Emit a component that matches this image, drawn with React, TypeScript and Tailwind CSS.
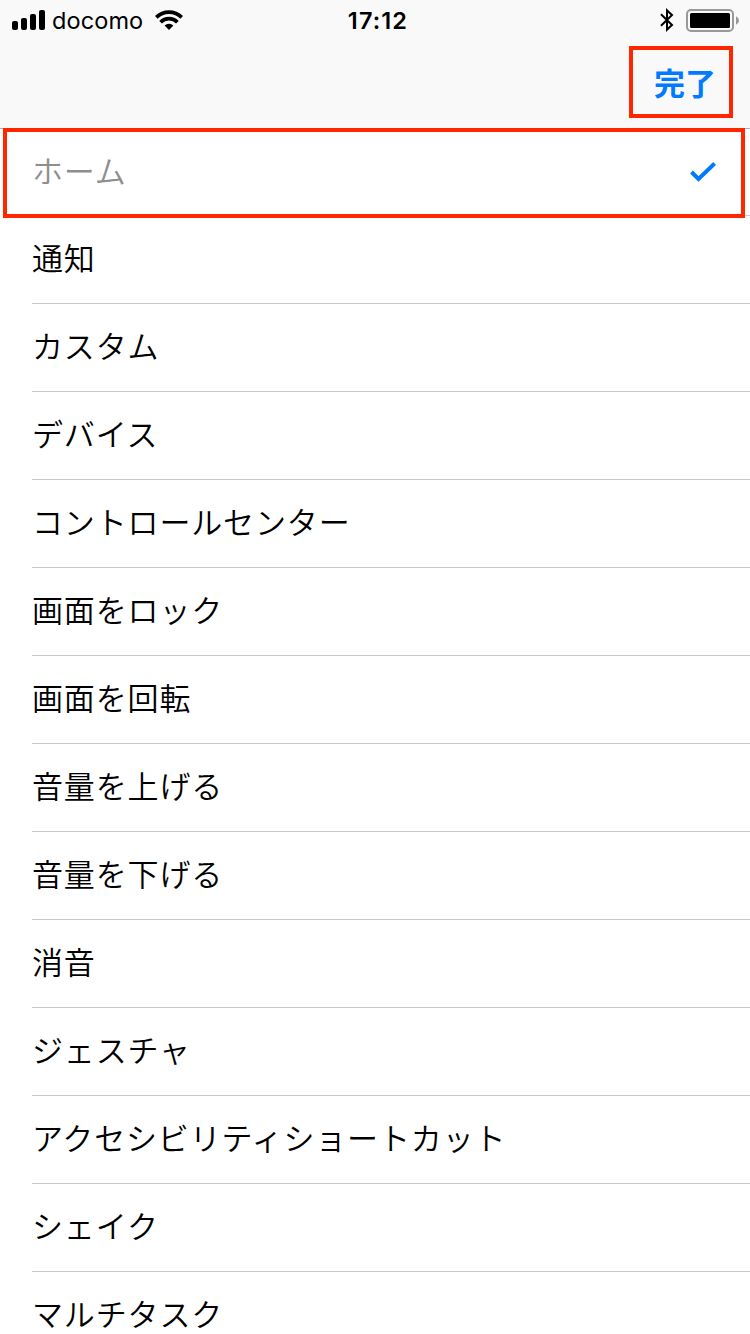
import React from 'react';

interface Action {
  label: string;
  selected?: boolean;
}

const actions: Action[] = [
  { label: 'ホーム', selected: true },
  { label: '通知' },
  { label: 'カスタム' },
  { label: 'デバイス' },
  { label: 'コントロールセンター' },
  { label: '画面をロック' },
  { label: '画面を回転' },
  { label: '音量を上げる' },
  { label: '音量を下げる' },
  { label: '消音' },
  { label: 'ジェスチャ' },
  { label: 'アクセシビリティショートカット' },
  { label: 'シェイク' },
  { label: 'マルチタスク' },
];

const SignalIcon: React.FC = () => (
  <svg width="33" height="20" viewBox="0 0 33 20" fill="currentColor">
    <rect x="0" y="11" width="6" height="9" rx="2" />
    <rect x="9" y="8" width="6" height="12" rx="2" />
    <rect x="18" y="4" width="6" height="16" rx="2" />
    <rect x="27" y="0" width="6" height="20" rx="2" />
  </svg>
);

const WifiIcon: React.FC = () => (
  <svg width="28" height="20" viewBox="0 0 28 20" fill="none" stroke="currentColor" strokeWidth="3.7">
    <path d="M1.3 7.4A18 18 0 0 1 26.7 7.4" />
    <path d="M5.6 12.3A11.6 11.6 0 0 1 22.4 12.3" />
    <path d="M14 20 9.6 15.6A6.2 6.2 0 0 1 18.4 15.6Z" fill="currentColor" stroke="none" />
  </svg>
);

const BluetoothIcon: React.FC = () => (
  <svg width="14" height="24" viewBox="0 0 14 24" fill="none" stroke="currentColor" strokeWidth="2">
    <path d="M1 6.2 12 17 7 21.6V2.4L12 7 1 17.8" />
  </svg>
);

const BatteryIcon: React.FC = () => (
  <svg width="53" height="23" viewBox="0 0 53 23">
    <rect x="1" y="1" width="46" height="21" rx="4" fill="none" stroke="#999999" strokeWidth="2" />
    <rect x="4" y="4" width="40" height="15" rx="1.5" fill="#000000" />
    <path d="M50 7.2Q53 8.8 53 11.5T50 15.8Z" fill="#999999" />
  </svg>
);

const CheckIcon: React.FC = () => (
  <svg width="26" height="20" viewBox="0 0 26 20" fill="none" stroke="#007aff" strokeWidth="4">
    <path d="M1.5 10 8.5 17 24.6 1.5" />
  </svg>
);

const StatusBar: React.FC = () => (
  <div className="grid h-10 grid-cols-[1fr_auto_1fr] items-center pl-3 pr-[11px] font-[Inter,sans-serif] leading-8">
    <div className="flex h-10 items-center">
      <SignalIcon />
      <span className="ml-[7px] w-[91px] whitespace-nowrap pt-0.5 text-[23.5px] tracking-[0.1px]">docomo</span>
      <span className="ml-3">
        <WifiIcon />
      </span>
    </div>
    <span className="pl-[5px] pt-0.5 text-[23.5px] font-semibold tracking-[1.1px]">17:12</span>
    <div className="flex h-10 items-center justify-end gap-3">
      <BluetoothIcon />
      <BatteryIcon />
    </div>
  </div>
);

const Header: React.FC = () => (
  <header className="h-[129px] border-b border-[#b2b2b2] bg-[#f9f9f9]">
    <StatusBar />
    <div className="flex justify-end pr-[17px] pt-1.5">
      <button className="flex h-[72px] w-[104px] items-center justify-center border-4 border-[#ff2600] pb-0.5 pl-2 text-[31px] font-bold leading-none text-[#007aff]">
        完了
      </button>
    </div>
  </header>
);

const ActionRow: React.FC<{ action: Action }> = ({ action }) => (
  <li
    className={`flex items-center justify-between border-b border-[#c8c8c8] pr-[34px] ${
      action.selected ? 'h-[87px] text-[#8e8e8e]' : 'h-[88px]'
    }`}
  >
    <span className="whitespace-nowrap pb-[5px] text-[31px] font-[350] leading-8 tracking-[0.85px]">{action.label}</span>
    {action.selected && <CheckIcon />}
  </li>
);

export default function App() {
  return (
    <div className="relative h-[1334px] w-[750px] overflow-hidden bg-white font-['Noto_Sans_CJK_JP',sans-serif] text-black">
      <Header />
      <ul className="pl-8">
        {actions.map((action) => (
          <ActionRow key={action.label} action={action} />
        ))}
      </ul>
      {/* highlight around the selected row */}
      <div className="pointer-events-none absolute left-[3px] top-32 h-[90px] w-[742px] border-4 border-[#ff2600]" />
    </div>
  );
}
